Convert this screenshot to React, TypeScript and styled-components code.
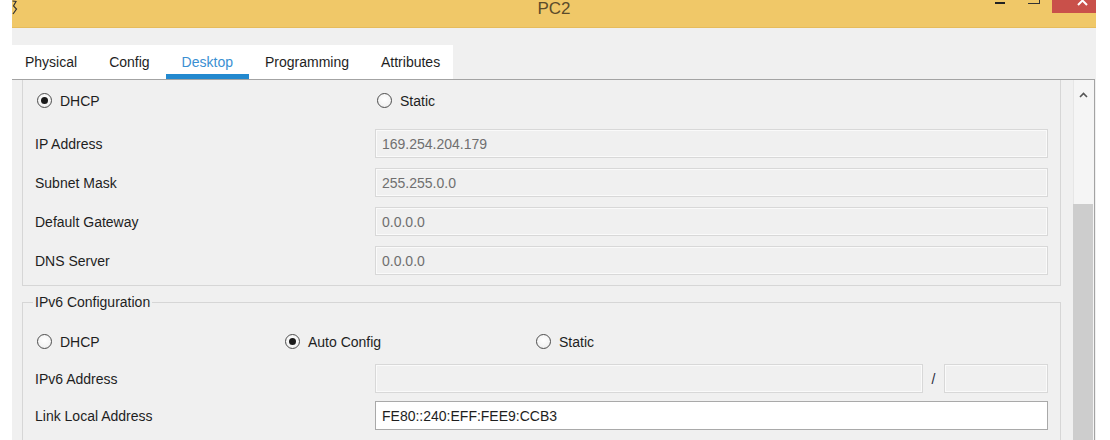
import React from "react";
import styled, { createGlobalStyle } from "styled-components";

const Global = createGlobalStyle`
  html, body { margin: 0; padding: 0; background: #ffffff; }
  body {
    font-family: "Liberation Sans", Arial, sans-serif;
    font-size: 14px;
    color: #1e1e1e;
  }
  * { box-sizing: border-box; }
`;

const Window = styled.div`
  margin-left: 12px;
  width: 1084px;
  height: 440px;
  background: #f0f0f0;
  display: flex;
  flex-direction: column;
  overflow: hidden;
`;

const TitleBar = styled.div`
  flex: none;
  height: 28px;
  background: #f0c868;
  box-shadow: inset 0 -1px 0 #e6bc5c;
  display: grid;
  grid-template-columns: 1fr auto 1fr;
  align-items: start;
`;

const WinIcon = styled.svg`
  display: block;
  width: 6px;
  height: 16px;
`;

const Title = styled.div`
  font-size: 17px;
  line-height: 17px;
  color: #5b4b2b;
`;

const Controls = styled.div`
  justify-self: end;
  display: flex;
  align-items: flex-start;
`;

const MinGlyph = styled.span`
  display: block;
  width: 10px;
  height: 2px;
  margin-top: 2px;
  background: #222;
`;

const MaxGlyph = styled.span`
  display: block;
  width: 12px;
  height: 4px;
  margin-left: 23px;
  border-right: 1.5px solid #333;
  border-bottom: 1.5px solid #333;
`;

const CloseBtn = styled.div`
  width: 44px;
  height: 13px;
  margin-left: 12px;
  background: #c9504a;
`;

const TabArea = styled.div`
  flex: none;
  padding-top: 17px;
`;

const TabStrip = styled.div`
  display: flex;
  width: 441px;
  height: 34px;
  background: #ffffff;
`;

const Tab = styled.div<{ $active?: boolean }>`
  display: flex;
  align-items: center;
  padding: 0 16px;
  color: ${(p) => (p.$active ? "#3a8fd2" : "#1e1e1e")};
  box-shadow: ${(p) => (p.$active ? "inset 0 -5px 0 #2389cf" : "none")};
  &:first-child {
    padding-left: 13px;
  }
`;

const Frame = styled.div`
  flex: 1;
  min-height: 0;
  width: 1083px;
  display: flex;
  padding-left: 10px;
  border-top: 1px solid #a3a3a3;
  border-right: 1px solid #a3a3a3;
`;

const Viewport = styled.div`
  flex: none;
  width: 1039px;
  overflow: hidden;
  display: flex;
  flex-direction: column;
`;

const ScrolledGroup = styled.div`
  flex: none;
  border: 1px solid #d6d6d6;
  border-top: none;
  padding: 6px 12px 10px;
  display: flex;
  flex-direction: column;
  gap: 10px;
`;

const GroupSet = styled.fieldset`
  flex: none;
  margin: 8px 0 0;
  padding: 0 12px 12px;
  border: 1px solid #d6d6d6;
  min-width: 0;
`;

const Legend = styled.legend`
  padding: 0 2px;
  margin-left: -2px;
  font-size: 14px;
  line-height: 16px;
  color: #1e1e1e;
`;

const Stack = styled.div`
  display: flex;
  flex-direction: column;
  gap: 8px;
  margin-top: 17px;
`;

const RadioRow = styled.div<{ $cols: string; $gapAfter?: number }>`
  display: grid;
  grid-template-columns: ${(p) => p.$cols};
  align-items: center;
  height: 29px;
  margin-bottom: ${(p) => p.$gapAfter ?? 0}px;
`;

const Option = styled.label`
  display: flex;
  align-items: center;
  gap: 8px;
  margin-left: 2px;
`;

const RadioDot = styled.span<{ $on?: boolean }>`
  width: 15px;
  height: 15px;
  border-radius: 50%;
  border: 1px solid #4d4d4d;
  background: radial-gradient(circle at 50% 40%, #ffffff 0%, #f4f4f4 60%, #e2e2e2 100%);
  display: flex;
  align-items: center;
  justify-content: center;
  &::after {
    content: "";
    width: 7px;
    height: 7px;
    border-radius: 50%;
    background: ${(p) => (p.$on ? "#1a1a1a" : "transparent")};
  }
`;

const FieldRow = styled.div<{ $cols?: string }>`
  display: grid;
  grid-template-columns: ${(p) => p.$cols ?? "340px 1fr"};
  align-items: center;
  height: 29px;
`;

const Label = styled.div`
  color: #1e1e1e;
`;

const Field = styled.div<{ $editable?: boolean }>`
  height: 29px;
  display: flex;
  align-items: center;
  padding: 0 6px;
  background: ${(p) => (p.$editable ? "#ffffff" : "#f0f0f0")};
  border: 1px solid ${(p) => (p.$editable ? "#a9a9a9" : "#d8d8d8")};
  box-shadow: ${(p) => (p.$editable ? "none" : "inset 0 0 0 1px #fafafa")};
  color: ${(p) => (p.$editable ? "#1e1e1e" : "#6f6f6f")};
  white-space: nowrap;
`;

const Slash = styled.div`
  text-align: center;
  color: #2a2a3a;
`;

const ScrollBar = styled.div`
  flex: none;
  width: 21px;
  margin-left: 12px;
  background: #f5f5f5;
  box-shadow: inset 1px 0 0 #e6e6e6;
  display: flex;
  flex-direction: column;
`;

const ArrowBtn = styled.div`
  flex: none;
  height: 30px;
  display: flex;
  align-items: center;
  justify-content: center;
`;

const Thumb = styled.div`
  flex: 1;
  margin-top: 94px;
  margin-right: 1px;
  background: #cdcdcd;
`;

const tabs = ["Physical", "Config", "Desktop", "Programming", "Attributes"];

const ipv4 = [
  ["IP Address", "169.254.204.179"],
  ["Subnet Mask", "255.255.0.0"],
  ["Default Gateway", "0.0.0.0"],
  ["DNS Server", "0.0.0.0"],
];

export default function App() {
  return (
    <>
      <Global />
      <Window>
        <TitleBar>
          <WinIcon viewBox="0 0 6 16">
            <path d="M0.5 1 L4 1.5 L1.5 6 L4.5 9 L1 14" fill="none" stroke="#333" strokeWidth="1.2" />
          </WinIcon>
          <Title>PC2</Title>
          <Controls>
            <MinGlyph />
            <MaxGlyph />
            <CloseBtn>
              <svg width="44" height="13" viewBox="0 0 44 13">
                <path d="M26 -4 L35 5 M35 -4 L26 5" stroke="#ffffff" strokeWidth="2" />
              </svg>
            </CloseBtn>
          </Controls>
        </TitleBar>

        <TabArea>
          <TabStrip>
            {tabs.map((t) => (
              <Tab key={t} $active={t === "Desktop"}>
                {t}
              </Tab>
            ))}
          </TabStrip>
        </TabArea>

        <Frame>
          <Viewport>
            <ScrolledGroup>
              <RadioRow $cols="340px 1fr" $gapAfter={4}>
                <Option>
                  <RadioDot $on />
                  DHCP
                </Option>
                <Option>
                  <RadioDot />
                  Static
                </Option>
              </RadioRow>
              {ipv4.map(([l, v]) => (
                <FieldRow key={l}>
                  <Label>{l}</Label>
                  <Field>{v}</Field>
                </FieldRow>
              ))}
            </ScrolledGroup>

            <GroupSet>
              <Legend>IPv6 Configuration</Legend>
              <Stack>
                <RadioRow $cols="248px 251px 1fr">
                  <Option>
                    <RadioDot />
                    DHCP
                  </Option>
                  <Option>
                    <RadioDot $on />
                    Auto Config
                  </Option>
                  <Option>
                    <RadioDot />
                    Static
                  </Option>
                </RadioRow>
                <FieldRow $cols="340px 1fr 21px 104px">
                  <Label>IPv6 Address</Label>
                  <Field />
                  <Slash>/</Slash>
                  <Field />
                </FieldRow>
                <FieldRow>
                  <Label>Link Local Address</Label>
                  <Field $editable>FE80::240:EFF:FEE9:CCB3</Field>
                </FieldRow>
              </Stack>
            </GroupSet>
          </Viewport>
          <ScrollBar>
            <ArrowBtn>
              <svg width="9" height="6" viewBox="0 0 9 6">
                <path d="M1 5 L4.5 1.5 L8 5" fill="none" stroke="#555" strokeWidth="1.6" />
              </svg>
            </ArrowBtn>
            <Thumb />
          </ScrollBar>
        </Frame>
      </Window>
    </>
  );
}
